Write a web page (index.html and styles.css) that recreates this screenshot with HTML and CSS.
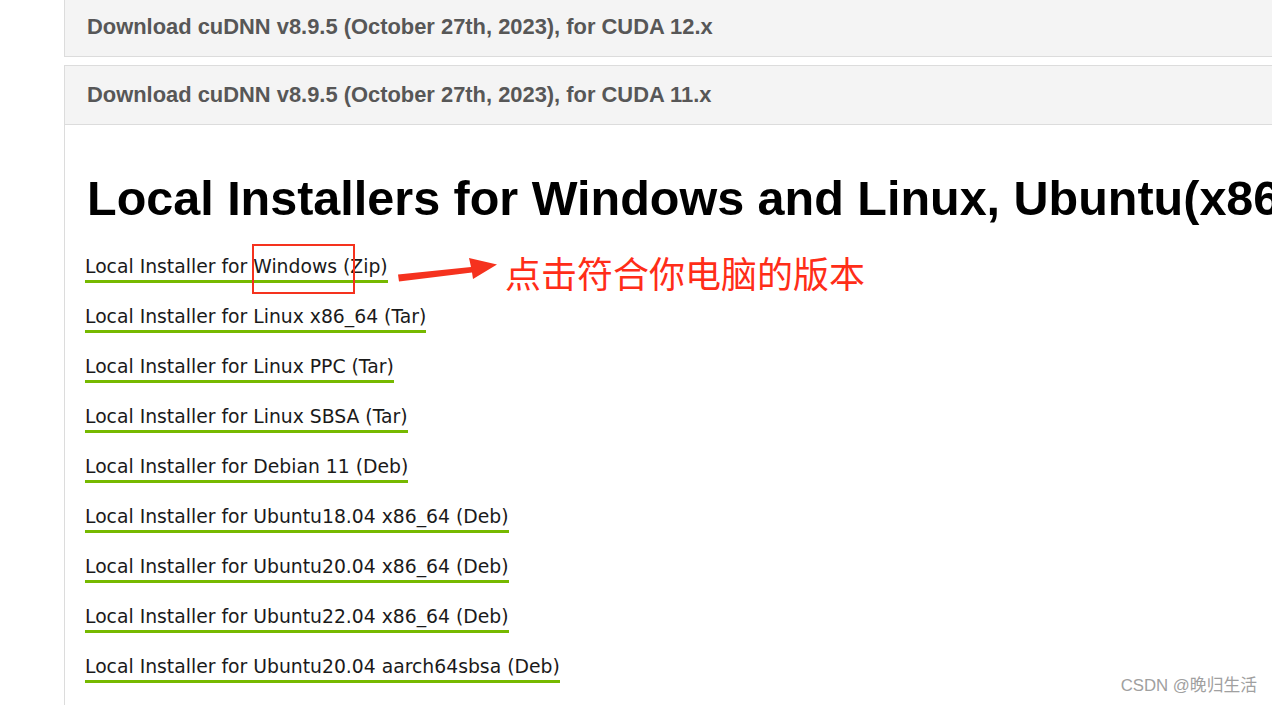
FILE: index.html
```html
<!DOCTYPE html>
<html lang="zh-CN">
<head>
<meta charset="utf-8">
<title>cuDNN Archive</title>
<link rel="stylesheet" href="styles.css">
</head>
<body>
<div class="page">
  <div class="bar bar-first">Download cuDNN v8.9.5 (October 27th, 2023), for CUDA 12.x</div>
  <div class="bar">Download cuDNN v8.9.5 (October 27th, 2023), for CUDA 11.x</div>
  <div class="content">
    <h1 class="heading">Local Installers for Windows and Linux, Ubuntu(x86_64, armsbsa)</h1>
    <ul class="links">
      <li><a class="link" href="#">Local Installer for Windows (Zip)</a></li>
      <li><a class="link" href="#">Local Installer for Linux x86_64 (Tar)</a></li>
      <li><a class="link" href="#">Local Installer for Linux PPC (Tar)</a></li>
      <li><a class="link" href="#">Local Installer for Linux SBSA (Tar)</a></li>
      <li><a class="link" href="#">Local Installer for Debian 11 (Deb)</a></li>
      <li><a class="link" href="#">Local Installer for Ubuntu18.04 x86_64 (Deb)</a></li>
      <li><a class="link" href="#">Local Installer for Ubuntu20.04 x86_64 (Deb)</a></li>
      <li><a class="link" href="#">Local Installer for Ubuntu22.04 x86_64 (Deb)</a></li>
      <li><a class="link" href="#">Local Installer for Ubuntu20.04 aarch64sbsa (Deb)</a></li>
    </ul>
  </div>
</div>

<div class="annot">
  <div class="annot-box"></div>
  <svg class="annot-arrow" width="110" height="30" viewBox="390 255 110 30" xmlns="http://www.w3.org/2000/svg">
    <polygon fill="#f5321e" points="398,274.5 471,267 469,258 497,264.5 473,279 472,272.5 399,281.5"/>
  </svg>
  <div class="annot-text">点击符合你电脑的版本</div>
</div>

<div class="watermark">CSDN @晚归生活</div>
</body>
</html>
```

FILE: styles.css
```css
html, body {
  margin: 0;
  padding: 0;
}
body {
  width: 1272px;
  height: 705px;
  overflow: hidden;
  position: relative;
  background: #ffffff;
  font-family: "DejaVu Sans", sans-serif;
}
.page {
  margin-left: 64px;
  width: 1208px;
  overflow: hidden;
}
.bar {
  box-sizing: border-box;
  width: 1240px;
  height: 60px;
  background: #f4f4f4;
  border: 1px solid #dcdcdc;
  border-right: none;
  display: flex;
  align-items: center;
  padding-left: 22px;
  font-family: "Liberation Sans", Arial, sans-serif;
  font-weight: 700;
  font-size: 21.9px;
  color: #575757;
  white-space: nowrap;
}
.bar-first {
  margin-top: -3px;
  margin-bottom: 8px;
}
.content {
  box-sizing: border-box;
  border-left: 1px solid #dcdcdc;
  padding-left: 20px;
  padding-top: 45px;
  height: 580px;
  overflow: hidden;
}
.heading {
  margin: 0 0 30px 2px;
  font-family: "Liberation Sans", Arial, sans-serif;
  font-weight: 700;
  font-size: 48.5px;
  line-height: 56px;
  color: #000000;
  white-space: nowrap;
}
.links {
  list-style: none;
  margin: 0;
  padding: 0;
  display: flex;
  flex-direction: column;
  align-items: flex-start;
  gap: 23px;
}
.link {
  display: inline-block;
  font-family: "DejaVu Sans", sans-serif;
  font-size: 18.8px;
  line-height: 22px;
  color: #1a1a1a;
  text-decoration: none;
  padding-bottom: 2px;
  border-bottom: 3px solid #76b900;
  white-space: nowrap;
}
.annot {
  position: absolute;
  left: 0;
  top: 0;
  width: 1272px;
  height: 705px;
  pointer-events: none;
}
.annot-box {
  position: absolute;
  left: 252px;
  top: 244px;
  width: 103px;
  height: 50px;
  box-sizing: border-box;
  border: 2.5px solid #f5321e;
}
.annot-arrow {
  position: absolute;
  left: 390px;
  top: 255px;
}
.annot-text {
  position: absolute;
  left: 505px;
  top: 252px;
  font-family: "Noto Sans CJK SC", sans-serif;
  font-size: 36px;
  line-height: 40px;
  color: #ff2d18;
  white-space: nowrap;
}
.watermark {
  position: absolute;
  right: 15px;
  top: 676px;
  font-family: "Liberation Sans", "Noto Sans CJK SC", sans-serif;
  font-size: 16.8px;
  line-height: 20px;
  color: #a0a0a0;
  white-space: nowrap;
}
```
